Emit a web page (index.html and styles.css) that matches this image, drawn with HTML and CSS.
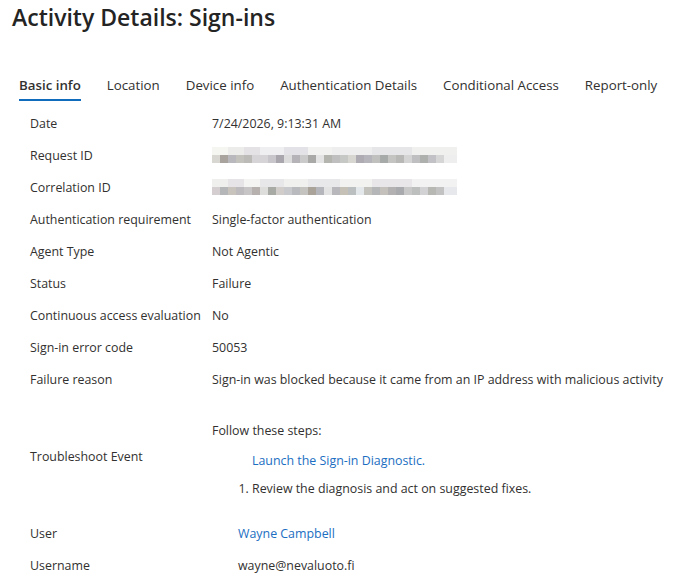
FILE: index.html
```html
<!DOCTYPE html>
<html lang="en">
<head>
  <meta charset="UTF-8" />
  <title>Activity Details: Sign-ins</title>
  <link rel="stylesheet" href="styles.css">
</head>
<body>
  <h1>Activity Details: Sign-ins</h1>

  <div class="tabs">
    <span class="tab active">Basic info</span>
    <span class="tab">Location</span>
    <span class="tab">Device info</span>
    <span class="tab">Authentication Details</span>
    <span class="tab">Conditional Access</span>
    <span class="tab">Report-only</span>
  </div>

  <div class="details">
    <div class="label">Date</div><div class="value">7/24/2026, 9:13:31 AM</div>
    <div class="label">Request ID</div><div class="value"><span class="blur blur-a"></span></div>
    <div class="label">Correlation ID</div><div class="value"><span class="blur blur-b"></span></div>
    <div class="label">Authentication requirement</div><div class="value">Single-factor authentication</div>
    <div class="label">Agent Type</div><div class="value">Not Agentic</div>
    <div class="label">Status</div><div class="value">Failure</div>
    <div class="label">Continuous access evaluation</div><div class="value">No</div>
    <div class="label">Sign-in error code</div><div class="value">50053</div>
    <div class="label">Failure reason</div><div class="value">Sign-in was blocked because it came from an IP address with malicious activity</div>

    <div class="label">Troubleshoot Event</div>
    <div class="value tall">
      <div class="steps">
        <p>Follow these steps:</p>
        <a class="link launch" href="#">Launch the Sign-in Diagnostic.</a>
        <ol>
          <li>Review the diagnosis and act on suggested fixes.</li>
        </ol>
      </div>
    </div>

    <div class="label">User</div><div class="value indent"><a class="link" href="#">Wayne Campbell</a></div>
    <div class="label">Username</div><div class="value indent">wayne@nevaluoto.fi</div>
  </div>
</body>
</html>
```

FILE: styles.css
```css
body {
  margin: 0;
  padding: 0 12px;
  font-family: "Open Sans", "Noto Sans", sans-serif;
  font-size: 12.4px;
  color: #323130;
  background: #fff;
}
h1 {
  margin: 0;
  padding-top: 2px;
  font-size: 23px;
  font-weight: 600;
  line-height: 30px;
  color: #242424;
}

.tabs {
  display: flex;
  gap: 26px;
  margin-top: 39px;
  padding-left: 7px;
}
.tab {
  font-size: 13.3px;
  line-height: 28px;
  border-bottom: 2px solid transparent;
}
.tab.active {
  font-weight: 600;
  border-bottom-color: #0f6cbd;
}

.details {
  display: grid;
  grid-template-columns: 182px 1fr;
  grid-template-rows: repeat(9, 32px) 122px;
  grid-auto-rows: 32px;
  margin-top: 6px;
  padding-left: 18px;
}
.label, .value {
  display: flex;
  align-items: center;
  white-space: nowrap;
}
.value.tall {
  padding-top: 8px;
  box-sizing: border-box;
}
.value.indent { padding-left: 26px; }

.steps { line-height: 18px; }
.steps p { margin: 0 0 12px; }
.link {
  color: #1b6ec2;
  text-decoration: none;
}
.launch {
  display: block;
  margin-left: 40px;
}
.steps ol {
  margin: 10px 0 0;
  padding-left: 40px;
}

.blur {
  display: inline-block;
  width: 245px;
  height: 16px;
  background-size: 245px 8px;
  background-repeat: no-repeat;
  background-position: 0 0, 0 8px;
}
.blur-a {
  background-image:
    linear-gradient(90deg, #f5f5f2 0 16px, #ececea 16px 32px, #e4e2e4 32px 48px, #efeef0 48px 72px, #e3e2e6 72px 96px, #f2f2f0 96px 120px, #eeeeee 120px 160px, #e6e6e9 160px 200px, #f0f0ee 200px 245px),
    linear-gradient(90deg, #d8d7d2 0 8px, #a8a39c 8px 16px, #b9b8bd 16px 24px, #c4c2bc 24px 32px, #bdbbb8 32px 40px, #d6d4d6 40px 56px, #c8c6cb 56px 64px, #aaa6ae 64px 72px, #dcdcdc 72px 80px, #b6b3b8 80px 88px, #cacaca 88px 96px, #a9aaa7 96px 104px, #e4e4e4 104px 112px, #b4b5ae 112px 120px, #bebfbe 120px 128px, #c6c8c6 128px 136px, #d7d6d0 136px 144px, #aeabb3 144px 152px, #b6b5bb 152px 160px, #c0c0be 160px 168px, #a6aaa8 168px 176px, #c4c4c2 176px 184px, #b8b8b6 184px 192px, #d4d4d4 192px 200px, #bfbfc1 200px 208px, #aeb0ad 208px 216px, #c2c2c6 216px 224px, #d6d6d6 224px 232px, #eeeeee 232px 245px);
}
.blur-b {
  background-image:
    linear-gradient(90deg, #efefed 0 16px, #e6e4e6 16px 32px, #f4f4f2 32px 48px, #e7e7e9 48px 72px, #f0f0ee 72px 96px, #e8e8ea 96px 128px, #f2f2f0 128px 160px, #e8e6e8 160px 200px, #f2f2f2 200px 245px),
    linear-gradient(90deg, #d4ced0 0 8px, #b5b6b8 8px 16px, #c9c3be 16px 24px, #bdbbbd 24px 32px, #c8c5c7 32px 40px, #b6b0ae 40px 48px, #dddedb 48px 56px, #a8aaa6 56px 64px, #d0cdcb 64px 72px, #c8c9cd 72px 80px, #b9babd 80px 88px, #c5c3c0 88px 96px, #a9a39a 96px 104px, #b4b6bb 104px 112px, #e3e3e3 112px 120px, #b8b8bc 120px 128px, #c6c1b6 128px 136px, #bcbfc0 136px 144px, #e4e8eb 144px 152px, #c4c2bc 152px 160px, #b5b6b8 160px 168px, #c4c0bc 168px 176px, #b4b1b2 176px 184px, #a9aaad 184px 192px, #c8c8c8 192px 200px, #bdbfbf 200px 208px, #d2d2d4 208px 216px, #b7b8b3 216px 224px, #c2c2c2 224px 232px, #e6e8ec 232px 245px);
}
```
